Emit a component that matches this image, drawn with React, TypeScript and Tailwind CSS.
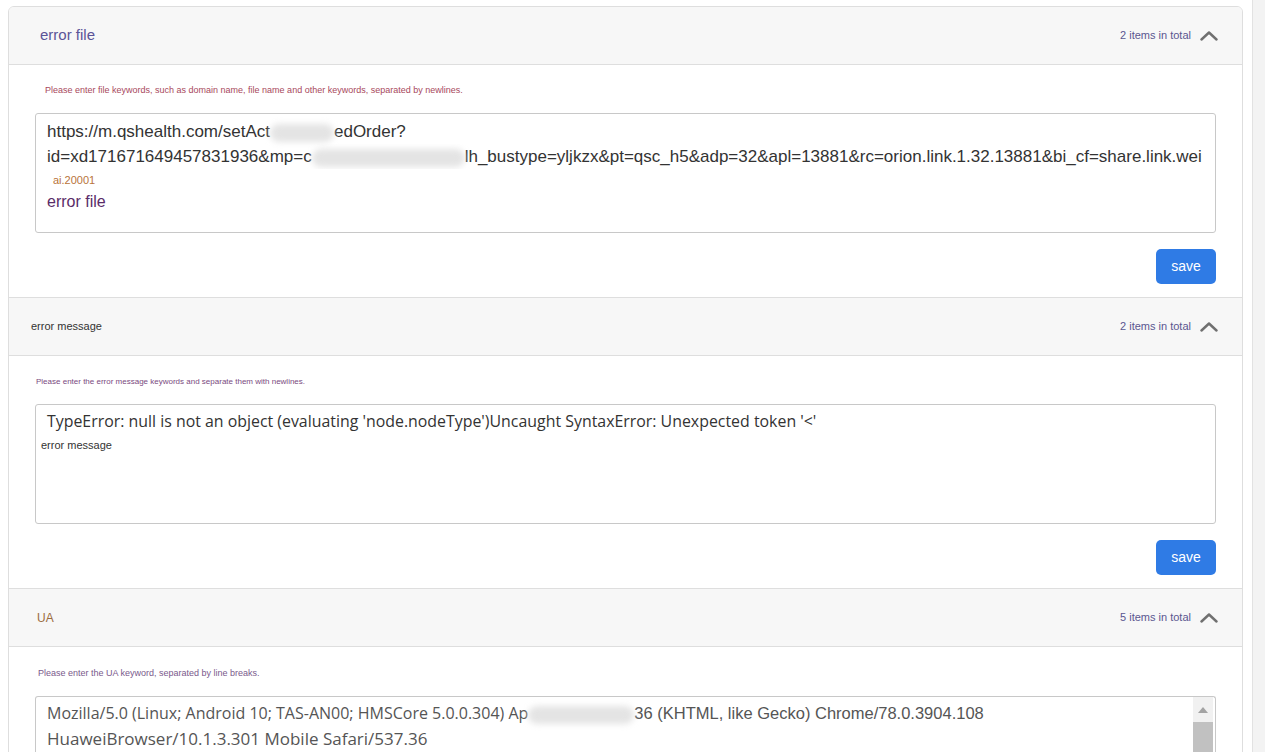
import React from "react";

const sans = { fontFamily: '"Liberation Sans", Arial, sans-serif' };

function Chevron() {
  return (
    <svg width="18" height="11" viewBox="0 0 18 11" fill="none">
      <polyline points="1.5,9.5 9,2.5 16.5,9.5" stroke="#707070" strokeWidth="2.4" strokeLinecap="round" strokeLinejoin="round" />
    </svg>
  );
}

function Blur({ w, h = 18 }: { w: number; h?: number }) {
  return (
    <span
      className="inline-block align-middle rounded-full bg-[#e4e4e4] blur-[3px]"
      style={{ width: w, height: h }}
    />
  );
}

function Header({ title, count, pl, titleClass }: { title: string; count: number; pl: string; titleClass: string }) {
  return (
    <div className={`flex h-[58px] items-center justify-between border-b border-[#dedede] bg-[#f7f7f7] pr-[24px] ${pl}`}>
      <span className={titleClass}>{title}</span>
      <div className="flex items-center gap-[9px]">
        <span className="text-[11px] text-[#5a5690]">{count} items in total</span>
        <Chevron />
      </div>
    </div>
  );
}

function SaveButton() {
  return (
    <div className="flex justify-end">
      <button className="h-[35px] w-[60px] rounded-[5px] bg-[#2f7be5] text-[14px] text-white">save</button>
    </div>
  );
}

export default function App() {
  return (
    <div className="flex min-h-[752px] bg-white" style={sans}>
      <div className="flex-1 pl-[8px] pr-[9px] pt-[6px]">
        <div className="overflow-hidden rounded-t-[6px] border border-[#dedede]">
          {/* error file */}
          <Header title="error file" count={2} pl="pl-[31px]" titleClass="text-[15px] text-[#5b5498]" />
          <div className="border-b border-[#dedede] px-[26px] pb-[13px] pt-[19px]">
            <p className="ml-[10px] h-[12px] text-[9px] leading-[12px] text-[#a8485c]">
              Please enter file keywords, such as domain name, file name and other keywords, separated by newlines.
            </p>
            <div className="mt-[17px] h-[120px] rounded-[3px] border border-[#c8c8c8] px-[11px] pt-[5px] text-[17px] leading-[25px] text-[#333]">
              <div className="whitespace-nowrap">
                https://m.qshealth.com/setAct<Blur w={64} />edOrder?
              </div>
              <div className="-mr-[10px] overflow-hidden whitespace-nowrap">
                id=xd171671649457831936&amp;mp=c<Blur w={153} />lh_bustype=yljkzx&amp;pt=qsc_h5&amp;adp=32&amp;apl=13881&amp;rc=orion.link.1.32.13881&amp;bi_cf=share.link.wei
              </div>
              <div className="ml-[6px] mt-[1px] h-[20px] text-[11px] leading-[20px] text-[#b8743a]">ai.20001</div>
              <div className="text-[16px] leading-[24px] text-[#5a2c68]">error file</div>
            </div>
            <div className="mt-[16px]">
              <SaveButton />
            </div>
          </div>

          {/* error message */}
          <Header title="error message" count={2} pl="pl-[22px]" titleClass="text-[11px] text-[#333]" />
          <div className="border-b border-[#dedede] px-[26px] pb-[13px] pt-[20px]">
            <p className="ml-[1px] h-[12px] text-[8px] leading-[12px] text-[#7a4a80]">
              Please enter the error message keywords and separate them with newlines.
            </p>
            <div className="mt-[16px] h-[120px] rounded-[3px] border border-[#c8c8c8] pl-[5px] pt-[3px]">
              <div
                className="ml-[6px] whitespace-nowrap text-[15.9px] leading-[26px] text-[#333]"
                style={{ fontFamily: '"Open Sans", "Noto Sans", sans-serif' }}
              >
                TypeError: null is not an object (evaluating 'node.nodeType')Uncaught SyntaxError: Unexpected token '&lt;'
              </div>
              <div className="mt-[3px] text-[11px] leading-[16px] text-[#333]">error message</div>
            </div>
            <div className="mt-[16px]">
              <SaveButton />
            </div>
          </div>

          {/* UA */}
          <Header title="UA" count={5} pl="pl-[28px]" titleClass="text-[12px] text-[#9c6d3e]" />
          <div className="px-[26px] pt-[20px]">
            <p className="ml-[3px] h-[12px] text-[9px] leading-[12px] text-[#7a5a8c]">
              Please enter the UA keyword, separated by line breaks.
            </p>
            <div className="mt-[17px] flex h-[80px] rounded-t-[3px] border border-b-0 border-[#c8c8c8]">
              <div
                className="flex-1 overflow-hidden px-[11px] pt-[3px] text-[16.5px] leading-[25px] text-[#555]"
                style={{ fontFamily: '"Open Sans", "Noto Sans", sans-serif' }}
              >
                <div className="whitespace-nowrap">
                  <span className="text-[16px]">Mozilla/5.0 (Linux; Android 10; TAS-AN00; HMSCore 5.0.0.304) Ap</span>
                  <Blur w={106} />
                  <span style={sans}>36 (KHTML, like Gecko) Chrome/78.0.3904.108</span>
                </div>
                <div className="whitespace-nowrap text-[17px]">HuaweiBrowser/10.1.3.301 Mobile Safari/537.36</div>
              </div>
              <div className="mr-[2px] flex w-[20px] flex-col bg-[#f1f1f1]">
                <div className="flex h-[25px] items-center justify-center">
                  <span className="h-0 w-0 border-x-[5px] border-b-[6px] border-x-transparent border-b-[#a3a3a3]" />
                </div>
                <div className="flex-1 bg-[#c1c1c1]" />
              </div>
            </div>
          </div>
        </div>
      </div>
      <div className="w-[13px] border-l border-[#e2e2e2] bg-[#f3f3f3]" />
    </div>
  );
}
